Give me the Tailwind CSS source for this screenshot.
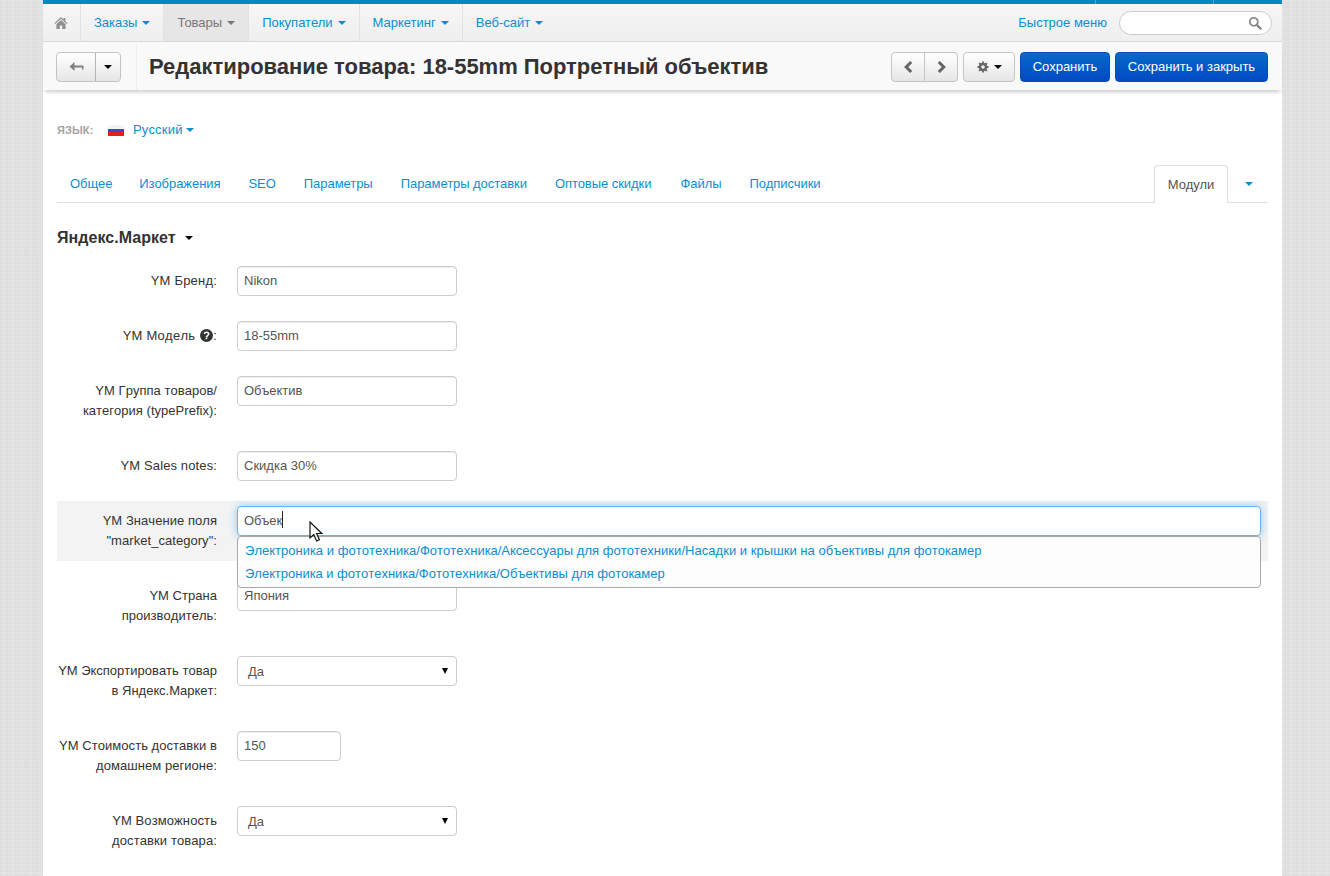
<!DOCTYPE html>
<html lang="ru">
<head>
<meta charset="UTF-8">
<title>Редактирование товара</title>
<script src="https://cdn.jsdelivr.net/npm/@tailwindcss/browser@4"></script>
</head>
<body class="h-[876px] overflow-hidden bg-[#e3e3e3] bg-[repeating-linear-gradient(0deg,rgba(0,0,0,0.02)_0px,rgba(255,255,255,0.08)_3px,rgba(0,0,0,0.015)_5px,rgba(255,255,255,0.05)_8px),repeating-linear-gradient(90deg,rgba(0,0,0,0.02)_0px,rgba(255,255,255,0.08)_4px,rgba(0,0,0,0.015)_7px,rgba(255,255,255,0.05)_9px)] font-['Liberation_Sans',Arial,sans-serif] text-[13px] leading-5 text-[#333]">
<div class="ml-[43px] h-[876px] w-[1239px] bg-white">

  <!-- top bar -->
  <div class="flex h-1 justify-end bg-[#0388c4]">
    <div class="w-[118px] border-l border-[#4aa9d6]"></div>
    <div class="w-[69px] border-l border-[#4aa9d6]"></div>
  </div>

  <!-- main menu -->
  <div class="flex h-[38px] items-stretch border-b border-[#d9d9d9] bg-linear-to-b from-[#f6f6f6] to-[#efefef]">
    <div class="flex w-[38px] items-center justify-center border-r border-[#e2e2e2] pr-[2px]">
      <svg class="h-[14px] w-[14px]" viewBox="0 0 14 14" fill="#8f8f8f"><path d="M7 1 0.5 7.2 1.3 8 7 2.8 12.7 8 13.5 7.2 11.3 5.1V2H9.6V3.5ZM2.4 8.3V13H5.8V9.6H8.2V13H11.6V8.3L7 4.1Z"/></svg>
    </div>
    <a class="flex items-center border-r border-[#e2e2e2] pl-[13px] pr-[13px] text-[#0b8ed0]">Заказы<i class="ml-[5px] h-0 w-0 border-x-4 border-t-4 border-x-transparent border-t-[#0b8ed0]"></i></a>
    <a class="flex items-center border-r border-[#e2e2e2] bg-[#e6e6e6] pl-[13px] pr-[13px] text-[#777]">Товары<i class="ml-[5px] h-0 w-0 border-x-4 border-t-4 border-x-transparent border-t-[#777]"></i></a>
    <a class="flex items-center border-r border-[#e2e2e2] pl-[13px] pr-[13px] text-[#0b8ed0]">Покупатели<i class="ml-[5px] h-0 w-0 border-x-4 border-t-4 border-x-transparent border-t-[#0b8ed0]"></i></a>
    <a class="flex items-center border-r border-[#e2e2e2] pl-[13px] pr-[13px] text-[#0b8ed0]">Маркетинг<i class="ml-[5px] h-0 w-0 border-x-4 border-t-4 border-x-transparent border-t-[#0b8ed0]"></i></a>
    <a class="flex items-center pl-[13px] pr-[13px] text-[#0b8ed0]">Веб-сайт<i class="ml-[5px] h-0 w-0 border-x-4 border-t-4 border-x-transparent border-t-[#0b8ed0]"></i></a>
    <div class="ml-auto flex items-center pr-[10px]">
      <a class="mr-3 text-[#0b8ed0]">Быстрое меню</a>
      <div class="relative h-6 w-[153px] rounded-full border border-[#cccccc] bg-white">
        <svg class="absolute right-[9px] top-[4px] h-[14px] w-[14px]" viewBox="0 0 14 14" fill="none" stroke="#8a8a8a"><circle cx="5.8" cy="5.8" r="4" stroke-width="1.8"/><path d="M8.8 8.8 12.6 12.6" stroke-width="2.4" stroke-linecap="round"/></svg>
      </div>
    </div>
  </div>

  <!-- toolbar -->
  <div class="relative flex h-[48px] items-center bg-[#f9f9f9] pl-[13px] pr-[14px] pt-px shadow-[0_4px_4px_-2px_rgba(0,0,0,0.2)]">
    <div class="flex h-[30px] w-[65px] rounded-[4px] border border-[#c4c4c4] bg-linear-to-b from-white to-[#e6e6e6]">
      <div class="flex w-[39px] items-center justify-center border-r border-[#b5b5b5]">
        <svg class="h-3 w-[15px]" viewBox="0 0 15 12" fill="#808080"><path d="M5.5 1V4.4H14.5V8.5H13V6.4H5.5V10L.5 5.5Z"/></svg>
      </div>
      <div class="flex flex-1 items-center justify-center"><i class="h-0 w-0 border-x-4 border-t-4 border-x-transparent border-t-black"></i></div>
    </div>
    <div class="ml-[15px] h-[46px] border-l border-[#eeeeee]"></div>
    <h1 class="ml-[12px] text-[22px] leading-[30px] font-bold tracking-[-0.02px] text-[#333]">Редактирование товара: 18-55mm Портретный объектив</h1>
    <div class="ml-auto flex items-center gap-[5px]">
      <div class="flex h-[30px] w-[67px] rounded-[4px] border border-[#c4c4c4] bg-linear-to-b from-white to-[#e6e6e6]">
        <div class="flex w-[33px] items-center justify-center border-r border-[#c4c4c4]">
          <svg class="h-3 w-[9px]" viewBox="0 0 9 12" fill="none" stroke="#666" stroke-width="3"><path d="M7.2 1 2.2 6 7.2 11"/></svg>
        </div>
        <div class="flex flex-1 items-center justify-center">
          <svg class="h-3 w-[9px]" viewBox="0 0 9 12" fill="none" stroke="#666" stroke-width="3"><path d="M1.8 1 6.8 6 1.8 11"/></svg>
        </div>
      </div>
      <div class="flex h-[30px] w-[52px] items-center justify-center gap-[5px] rounded-[4px] border border-[#c4c4c4] bg-linear-to-b from-white to-[#e6e6e6]">
        <svg class="h-3 w-3" viewBox="0 0 12 12" fill="none" stroke="#666"><circle cx="6" cy="6" r="3" stroke-width="2.4"/><path d="M6 .5V2.5M6 9.5V11.5M.5 6H2.5M9.5 6H11.5M2.1 2.1 3.5 3.5M8.5 8.5 9.9 9.9M2.1 9.9 3.5 8.5M8.5 3.5 9.9 2.1" stroke-width="1.8"/></svg>
        <i class="h-0 w-0 border-x-4 border-t-4 border-x-transparent border-t-black"></i>
      </div>
      <a class="flex h-[30px] w-[90px] items-center justify-center rounded-[4px] border border-[#0650ad] bg-linear-to-b from-[#0a69c8] to-[#0349c2] text-white">Сохранить</a>
      <a class="flex h-[30px] w-[153px] items-center justify-center rounded-[4px] border border-[#0650ad] bg-linear-to-b from-[#0a69c8] to-[#0349c2] text-white">Сохранить и закрыть</a>
    </div>
  </div>

  <div class="px-[14px]">
    <!-- language -->
    <div class="mt-[30px] flex h-5 items-center">
      <span class="w-[51px] text-[11px] font-bold uppercase tracking-[0.1px] text-[#a3a3a3]">Язык:</span>
      <span class="h-[11px] w-4 bg-[linear-gradient(#f4f4f4_33%,#3a46d8_33%,#3a46d8_66%,#e02020_66%)]"></span>
      <a class="ml-[9px] tracking-[0.2px] text-[#0b8ed0]">Русский</a>
      <i class="ml-[3px] h-0 w-0 border-x-4 border-t-4 border-x-transparent border-t-[#0b8ed0]"></i>
    </div>

    <!-- tabs -->
    <div class="mt-[25px] flex h-[38px] items-stretch border-b border-[#dddddd] tracking-[-0.05px]">
      <a class="mr-px flex items-center px-[13px] text-[#0b8ed0]">Общее</a>
      <a class="mr-[2px] flex items-center px-[13px] text-[#0b8ed0]">Изображения</a>
      <a class="mr-[2px] flex items-center px-[13px] text-[#0b8ed0]">SEO</a>
      <a class="mr-[2px] flex items-center px-[13px] text-[#0b8ed0]">Параметры</a>
      <a class="mr-[2px] flex items-center px-[13px] text-[#0b8ed0]">Параметры доставки</a>
      <a class="mr-[3px] flex items-center px-[13px] text-[#0b8ed0]">Оптовые скидки</a>
      <a class="mr-[2px] flex items-center px-[13px] text-[#0b8ed0]">Файлы</a>
      <a class="flex items-center px-[13px] text-[#0b8ed0]">Подписчики</a>
      <a class="-mb-px ml-auto flex w-[74px] items-center justify-center rounded-t-[4px] border border-b-0 border-[#dddddd] bg-white text-[#555]">Модули</a>
      <div class="flex w-[40px] items-center justify-center pl-[2px]"><i class="h-0 w-0 border-x-4 border-t-4 border-x-transparent border-t-[#0b8ed0]"></i></div>
    </div>

    <!-- section -->
    <div class="mt-[25px] mb-[13px] flex h-5 items-center">
      <span class="text-[16px] font-bold tracking-[0.05px] text-[#333]">Яндекс.Маркет</span>
      <i class="ml-[9px] h-0 w-0 border-x-4 border-t-4 border-x-transparent border-t-black"></i>
    </div>

    <!-- form -->
    <div class="mb-[15px] flex py-[5px]">
      <label class="w-[160px] pt-[5px] pb-[5px] text-right tracking-[0.2px] [font-kerning:none]">YM Бренд:</label>
      <input class="ml-5 h-[30px] w-[220px] rounded-[4px] border border-[#cccccc] px-[6px] pb-[2px] text-[#555] shadow-[inset_0_1px_1px_rgba(0,0,0,0.07)]" value="Nikon">
    </div>
    <div class="mb-[15px] flex py-[5px]">
      <label class="w-[160px] pt-[5px] pb-[5px] text-right tracking-[0.25px] [font-kerning:none]">YM Модель <svg class="-mt-[2px] ml-px inline-block h-[13px] w-[13px] align-middle" viewBox="0 0 13 13"><circle cx="6.5" cy="6.5" r="6.5" fill="#333"/><path d="M4.4 5C4.5 3.8 5.4 3.2 6.5 3.2 7.8 3.2 8.7 3.9 8.7 5 8.7 6.3 7 6.2 6.9 7.6H5.8" fill="none" stroke="#fff" stroke-width="1.5"/><rect x="5.6" y="8.6" width="1.7" height="1.6" fill="#fff"/></svg>:</label>
      <input class="ml-5 h-[30px] w-[220px] rounded-[4px] border border-[#cccccc] px-[6px] pb-[2px] text-[#555] shadow-[inset_0_1px_1px_rgba(0,0,0,0.07)]" value="18-55mm">
    </div>
    <div class="mb-[15px] flex py-[5px]">
      <label class="w-[160px] pt-[5px] pb-[5px] text-right tracking-[0.03px] [font-kerning:none]">YM Группа товаров/<br>категория (typePrefix):</label>
      <input class="ml-5 h-[30px] w-[220px] rounded-[4px] border border-[#cccccc] px-[6px] pb-[2px] text-[#555] shadow-[inset_0_1px_1px_rgba(0,0,0,0.07)]" value="Объектив">
    </div>
    <div class="mb-[15px] flex py-[5px]">
      <label class="w-[160px] pt-[5px] pb-[5px] text-right tracking-[0.12px] [font-kerning:none]">YM Sales notes:</label>
      <input class="ml-5 h-[30px] w-[220px] rounded-[4px] border border-[#cccccc] px-[6px] pb-[2px] text-[#555] shadow-[inset_0_1px_1px_rgba(0,0,0,0.07)]" value="Скидка 30%">
    </div>

    <!-- focused row with suggestions -->
    <div class="relative mb-[15px] flex bg-[#f3f3f3] py-[5px] pr-[7px]">
      <label class="w-[160px] pt-[5px] pb-[5px] text-right tracking-[0.05px] [font-kerning:none]">YM Значение поля<br>"market_category":</label>
      <div class="relative ml-5 h-[30px] flex-1">
        <input class="h-[30px] w-full rounded-[4px] border border-[#6fb3ee] bg-white px-[6px] pb-[2px] text-[#555] shadow-[0_0_8px_rgba(82,168,236,0.6)] outline-none" value="Объек">
        <span class="absolute left-[45px] top-[5px] h-[17px] w-px bg-[#222]"></span>
        <svg class="absolute left-[72px] top-[15px] z-20 h-[22px] w-[15px]" viewBox="0 0 15 22"><path d="M1 1V17L4.8 13.5 7.6 20 10.4 18.8 7.6 12.5H12.8Z" fill="#fff" stroke="#111" stroke-width="1.2"/></svg>
        <div class="absolute left-0 right-0 top-[30px] z-10 h-[52px] rounded-[4px] border border-[#a8a8a8] bg-[#fdfdfd] pl-[7px] pt-[4px] text-[#0b8ed0] [font-kerning:none]">
          <div class="h-[23px] leading-[20px] tracking-[0.04px]">Электроника и фототехника/Фототехника/Аксессуары для фототехники/Насадки и крышки на объективы для фотокамер</div>
          <div class="h-[23px] leading-[20px]">Электроника и фототехника/Фототехника/Объективы для фотокамер</div>
        </div>
      </div>
    </div>

    <div class="mb-[15px] flex py-[5px]">
      <label class="w-[160px] pt-[5px] pb-[5px] text-right tracking-[0.03px] [font-kerning:none]">YM Страна<br>производитель:</label>
      <input class="ml-5 h-[30px] w-[220px] rounded-[4px] border border-[#cccccc] px-[6px] pb-[2px] text-[#555]" value="Япония">
    </div>
    <div class="mb-[15px] flex py-[5px]">
      <label class="w-[160px] pt-[5px] pb-[5px] text-right [font-kerning:none]">YM Экспортировать товар<br>в Яндекс.Маркет:</label>
      <div class="relative ml-5 h-[30px] w-[220px] rounded-[4px] border border-[#cccccc] bg-white pl-[10px] leading-[29px] text-[#555]">Да<i class="absolute right-[8px] top-[11px] h-0 w-0 border-x-[3px] border-t-[6px] border-x-transparent border-t-black"></i></div>
    </div>
    <div class="mb-[15px] flex py-[5px]">
      <label class="w-[160px] pt-[5px] pb-[5px] text-right tracking-[0.05px] [font-kerning:none]">YM Стоимость доставки в<br>домашнем регионе:</label>
      <input class="ml-5 h-[30px] w-[104px] rounded-[4px] border border-[#cccccc] px-[6px] pb-[2px] text-[#555] shadow-[inset_0_1px_1px_rgba(0,0,0,0.07)]" value="150">
    </div>
    <div class="mb-[15px] flex py-[5px]">
      <label class="w-[160px] pt-[5px] pb-[5px] text-right tracking-[0.1px] [font-kerning:none]">YM Возможность<br>доставки товара:</label>
      <div class="relative ml-5 h-[30px] w-[220px] rounded-[4px] border border-[#cccccc] bg-white pl-[10px] leading-[29px] text-[#555]">Да<i class="absolute right-[8px] top-[11px] h-0 w-0 border-x-[3px] border-t-[6px] border-x-transparent border-t-black"></i></div>
    </div>
  </div>
</div>
</body>
</html>
